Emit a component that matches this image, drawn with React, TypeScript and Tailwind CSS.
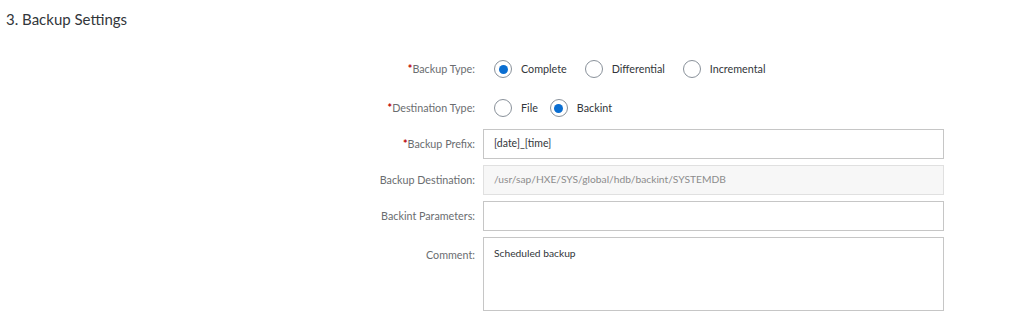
import React from "react";

const font = { fontFamily: "Lato, 'Open Sans', sans-serif" };

function Radio({ checked, label }: { checked?: boolean; label: string }) {
  return (
    <label className="flex items-center">
      <span className="w-[18px] h-[18px] rounded-full border border-[#89919a] bg-white flex items-center justify-center">
        {checked && <span className="w-[9px] h-[9px] rounded-full bg-[#0a6ed1]" />}
      </span>
      <span className="ml-[9px] text-[10.75px] text-[#32363a]">{label}</span>
    </label>
  );
}

function Label({ text, req }: { text: string; req?: boolean }) {
  return (
    <div className="text-right text-[10.75px] text-[#6a6d70]">
      {req && <span className="text-[#bb0000] font-bold">*</span>}
      {text}:
    </div>
  );
}

export default function App() {
  return (
    <div className="w-[1024px] h-[328px] bg-white" style={font}>
      <div className="pl-[6px] pt-[8px] text-[15px] text-[#32363a] h-[38px]">3. Backup Settings</div>
      <div className="grid grid-cols-[475px_461px] gap-x-[8px] items-center mt-[16px]">
        <Label text="Backup Type" req />
        <div className="flex items-center gap-[18px] h-[30px] pl-[11px]">
          <Radio checked label="Complete" />
          <Radio label="Differential" />
          <Radio label="Incremental" />
        </div>
        <div className="h-[9px] col-span-2" />
        <Label text="Destination Type" req />
        <div className="flex items-center gap-[12px] h-[30px] pl-[11px]">
          <Radio label="File" />
          <Radio checked label="Backint" />
        </div>
        <div className="h-[6px] col-span-2" />
        <Label text="Backup Prefix" req />
        <div className="h-[30px] border border-[#c6c6c6] bg-white px-[10px] flex items-center text-[10.5px] text-[#32363a]">
          [date]_[time]
        </div>
        <div className="h-[6px] col-span-2" />
        <Label text="Backup Destination" />
        <div className="h-[30px] border border-[#e0e0e0] bg-[#f7f7f7] px-[10px] flex items-center text-[10.25px] text-[#8c8c8c]">
          /usr/sap/HXE/SYS/global/hdb/backint/SYSTEMDB
        </div>
        <div className="h-[6px] col-span-2" />
        <Label text="Backint Parameters" />
        <div className="h-[30px] border border-[#c6c6c6] bg-white" />
        <div className="h-[6px] col-span-2" />
        <div className="self-start pt-[10px]">
          <Label text="Comment" />
        </div>
        <div className="h-[74px] border border-[#c6c6c6] bg-white px-[10px] pt-[8px] text-[10.25px] text-[#32363a]">
          Scheduled backup
        </div>
      </div>
    </div>
  );
}
